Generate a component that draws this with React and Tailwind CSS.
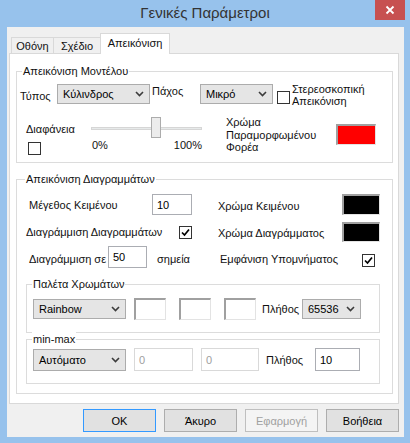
import * as React from 'react'

const font = { fontFamily: '"Liberation Sans", Arial, sans-serif' }

function Chevron() {
  return (
    <svg width="9" height="6" viewBox="0 0 9 6" className="shrink-0">
      <path d="M1 1 L4.5 4.5 L8 1" fill="none" stroke="#3c3c3c" strokeWidth="1.6" />
    </svg>
  )
}

function Combo({ value, className }) {
  return (
    <div
      className={
        'flex items-center justify-between pl-[5px] pr-[5px] bg-[#e5e5e5] border border-[#acacac] text-black shrink-0 ' +
        className
      }
    >
      <span>{value}</span>
      <Chevron />
    </div>
  )
}

function Check({ checked, className = '' }) {
  return (
    <div
      className={
        'w-[13px] h-[13px] shrink-0 bg-white border border-[#333333] flex items-center justify-center ' +
        className
      }
    >
      {checked ? (
        <svg width="9" height="9" viewBox="0 0 9 9">
          <path d="M1 4.5 L3.5 7 L8 1.5" fill="none" stroke="#000" strokeWidth="1.7" />
        </svg>
      ) : null}
    </div>
  )
}

function TextBox({ value, className = '', disabled }) {
  return (
    <div
      className={
        'shrink-0 bg-white border flex items-center pl-[4px] ' +
        (disabled ? 'border-[#d9d9d9] text-[#a0a0a0] ' : 'border-[#abadb3] text-black ') +
        className
      }
    >
      {value}
    </div>
  )
}

function Swatch({ className }) {
  return (
    <div
      className={
        'shrink-0 border-t-2 border-l-2 border-b border-r border-t-[#a0a0a0] border-l-[#a0a0a0] border-b-[#e3e3e3] border-r-[#e3e3e3] ' +
        className
      }
    />
  )
}

function Group({ label, labelLeft, className, children }) {
  return (
    <div className={'relative border border-[#dcdcdc] shrink-0 ' + className}>
      <span className={'absolute -top-[8px] bg-white px-[1px] leading-[14px] ' + labelLeft}>{label}</span>
      {children}
    </div>
  )
}

function Button({ children, primary, disabled }) {
  return (
    <div
      className={
        'w-[73px] h-[23px] flex items-center justify-center border ' +
        (disabled
          ? 'bg-[#f4f4f4] border-[#bfbfbf] text-[#a0a0a0]'
          : primary
          ? 'bg-[#e1e1e1] border-[#3399ff] text-black'
          : 'bg-[#e1e1e1] border-[#adadad] text-black')
      }
    >
      {children}
    </div>
  )
}

export default function App() {
  return (
    <div
      className="w-[410px] h-[443px] bg-[#97c2ec] flex flex-col text-[11px] leading-[14px] text-[#111111] whitespace-nowrap"
      style={font}
    >
      {/* title bar */}
      <div className="relative h-[27px] shrink-0 flex items-center justify-center">
        <span className="text-[15px] text-[#333333] leading-[18px] -mt-[1px]">Γενικές Παράμετροι</span>
        <div className="absolute top-0 right-[5px] w-[30px] h-[20px] bg-[#c75050] flex items-center justify-center">
          <svg width="10" height="10" viewBox="0 0 10 10">
            <path d="M1.5 1.5 L8.5 8.5 M8.5 1.5 L1.5 8.5" stroke="#fff" strokeWidth="1.8" />
          </svg>
        </div>
      </div>

      {/* client */}
      <div className="ml-[7px] w-[397px] h-[410px] bg-[#f0f0f0] flex flex-col">
        {/* tabs */}
        <div className="flex items-end h-[26px] pl-[4px] shrink-0">
          <div className="h-[17px] w-[43px] mb-[-1px] border border-[#d9d9d9] border-b-0 bg-[#f0f0f0] flex items-center justify-center">
            Οθόνη
          </div>
          <div className="h-[17px] w-[47px] mb-[-1px] border border-l-0 border-[#d9d9d9] border-b-0 bg-[#f0f0f0] flex items-center justify-center">
            Σχέδιο
          </div>
          <div className="relative z-10 h-[21px] w-[70px] -ml-[1px] mb-[-1px] border border-[#d9d9d9] border-b-0 bg-white flex items-start justify-center pt-[2px]">
            Απεικόνιση
          </div>
        </div>

        {/* panel */}
        <div className="ml-[2px] w-[390px] h-[351px] bg-white border border-[#d9d9d9] flex flex-col shrink-0">
          {/* group 1 */}
          <Group label="Απεικόνιση Μοντέλου" labelLeft="left-[5px]" className="ml-[6px] mt-[17px] w-[377px] h-[92px]">
            <div className="flex items-start h-[20px] mt-[12px]">
              <span className="ml-[3px] w-[37px] mt-[5px]">Τύπος</span>
              <Combo value="Κύλινδρος" className="w-[93px] h-[20px]" />
              <span className="ml-[2px] w-[48px]">Πάχος</span>
              <Combo value="Μικρό" className="w-[73px] h-[20px]" />
              <Check className="ml-[4px] mt-[7px]" />
              <span className="ml-[2px] -mt-[1px] leading-[12px]">
                Στερεοσκοπική
                <br />
                Απεικόνιση
              </span>
            </div>
            <div className="flex items-start mt-[13px]">
              <div className="ml-[9px] w-[65px] flex flex-col shrink-0">
                <span className="mt-[5px]">Διαφάνεια</span>
                <Check className="ml-[2px] mt-[6px]" />
              </div>
              <div className="w-[111px] flex flex-col shrink-0">
                <div className="relative h-[21px]">
                  <div className="absolute left-0 right-0 top-[10px] h-[3px] bg-[#e7eaea] border border-[#d6d6d6]" />
                  <div className="absolute left-[60px] top-0 w-[10px] h-[21px] bg-[#ececec] border border-[#acacac]" />
                </div>
                <div className="flex justify-between">
                  <span className="ml-[1px]">0%</span>
                  <span>100%</span>
                </div>
              </div>
              <span className="ml-[24px] w-[110px] leading-[12.5px] -mt-[1px] shrink-0">
                Χρώμα
                <br />
                Παραμορφωμένου
                <br />
                Φορέα
              </span>
              <Swatch className="w-[40px] h-[21px] mt-[7px] bg-[#ff0000]" />
            </div>
          </Group>

          {/* group 2 */}
          <Group label="Απεικόνιση Διαγραμμάτων" labelLeft="left-[8px]" className="ml-[6px] mt-[16px] w-[377px] h-[215px]">
            <div className="flex items-center h-[21px] mt-[14px]">
              <span className="ml-[12px] w-[123px] shrink-0">Μέγεθος Κειμένου</span>
              <TextBox value="10" className="w-[40px] h-[21px]" />
              <span className="ml-[26px] w-[124px] mt-[2px] shrink-0">Χρώμα Κειμένου</span>
              <Swatch className="w-[38px] h-[21px] bg-black" />
            </div>
            <div className="flex items-center h-[20px] mt-[7px]">
              <span className="ml-[9px] w-[153px] shrink-0">Διαγράμμιση Διαγραμμάτων</span>
              <Check checked />
              <span className="ml-[26px] w-[124px] mt-[2px] shrink-0">Χρώμα Διαγράμματος</span>
              <Swatch className="w-[38px] h-[20px] bg-black" />
            </div>
            <div className="flex items-start h-[22px] mt-[4px]">
              <span className="ml-[12px] w-[79px] mt-[6px] shrink-0">Διαγράμμιση σε</span>
              <TextBox value="50" className="w-[39px] h-[22px]" />
              <span className="ml-[10px] w-[63px] mt-[6px] shrink-0">σημεία</span>
              <span className="w-[142px] mt-[6px] shrink-0">Εμφάνιση Υπομνήματος</span>
              <Check checked className="mt-[8px]" />
            </div>

            <Group label="Παλέτα Χρωμάτων" labelLeft="left-[5px]" className="ml-[9px] mt-[16px] w-[354px] h-[49px]">
              <div className="flex items-center mt-[13px] ml-[6px]">
                <Combo value="Rainbow" className="w-[93px] h-[20px]" />
                <Swatch className="ml-[8px] w-[32px] h-[22px] bg-white" />
                <Swatch className="ml-[13px] w-[32px] h-[22px] bg-white" />
                <Swatch className="ml-[13px] w-[32px] h-[22px] bg-white" />
                <span className="ml-[6px] w-[40px] shrink-0">Πλήθος</span>
                <Combo value="65536" className="w-[59px] h-[20px]" />
              </div>
            </Group>

            <Group label="min-max" labelLeft="left-[5px]" className="ml-[9px] mt-[6px] w-[354px] h-[45px]">
              <div className="flex items-center mt-[8px] ml-[6px]">
                <Combo value="Αυτόματο" className="w-[93px] h-[22px]" />
                <TextBox value="0" disabled className="ml-[8px] w-[59px] h-[23px]" />
                <TextBox value="0" disabled className="ml-[8px] w-[58px] h-[23px]" />
                <span className="ml-[7px] w-[49px] shrink-0">Πλήθος</span>
                <TextBox value="10" className="w-[45px] h-[23px]" />
              </div>
            </Group>
          </Group>
        </div>

        {/* buttons */}
        <div className="flex mt-[5px] ml-[76px] gap-[8px]">
          <Button primary>OK</Button>
          <Button>Άκυρο</Button>
          <Button disabled>Εφαρμογή</Button>
          <Button>Βοήθεια</Button>
        </div>
      </div>
    </div>
  )
}
